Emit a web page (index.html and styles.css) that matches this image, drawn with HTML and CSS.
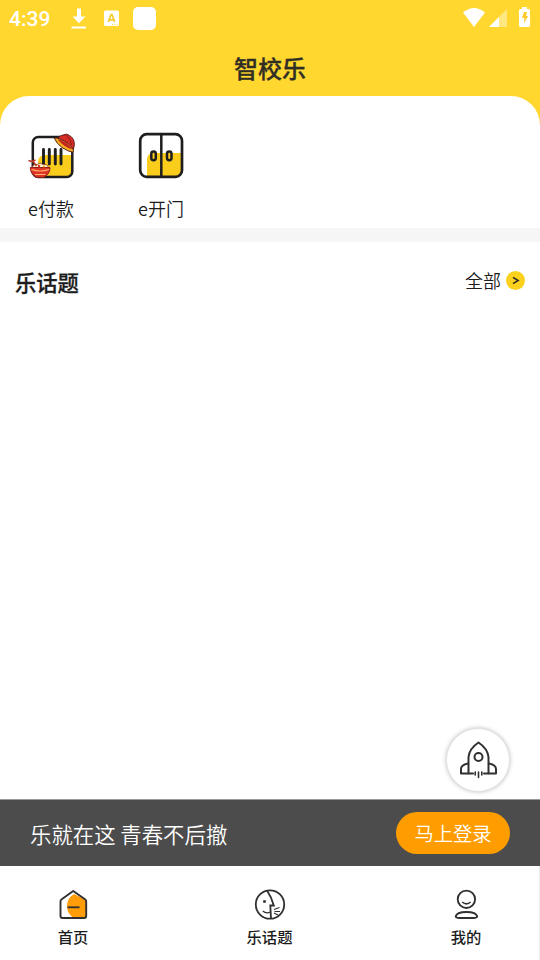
FILE: index.html
```html
<!DOCTYPE html>
<html lang="zh-CN">
<head>
<meta charset="utf-8">
<title>智校乐</title>
<link rel="stylesheet" href="styles.css">
</head>
<body>
<div class="app">
  <header class="header">
    <div class="status">
      <span class="time">4:39</span>
      <svg class="status-left" width="90" height="26" viewBox="69 6 90 26" fill="#fff">
        <path d="M77 8.500h4v8h4.500L79 23.200 72.500 16.500H77zM71.500 26.500h14.500v2H71.500z"/>
        <rect x="104" y="10.500" width="15" height="15.500" rx="1.500"/>
        <path d="M108.300 22 111 14.500h1L114.700 22M109.300 19.800h4.400" fill="none" stroke="#f5cb2b" stroke-width="1.700"/>
        <path d="M112 24.400h6" stroke="#ffd72f" stroke-width="1" stroke-dasharray="1 1.200"/>
        <rect x="133" y="7" width="23" height="23" rx="5"/>
      </svg>
      <svg class="status-right" width="72" height="26" viewBox="461 6 72 26" fill="#fff">
        <path d="M463 12.500Q474 3.500 485 12.500L474 27z"/>
        <path d="M507 9v18h-18z" opacity=".4"/>
        <path d="M499 17v10h-10z"/>
        <path d="M522 7h5v2h1.500q1.500 0 1.500 1.500V25.500q0 1.500-1.500 1.500h-8q-1.500 0-1.500-1.500V10.500q0-1.500 1.500-1.500H522z"/>
        <path d="M524 12h3l-1 4h2l-4 7.500.500-5.500H522z" fill="#ffc928"/>
      </svg>
    </div>
    <h1 class="title">智校乐</h1>
  </header>

  <nav class="services">
    <a class="service">
      <svg width="56" height="52" viewBox="23 130 56 52">
        <path d="M38 177v-15q0-7 8-7h27v18q0 4-5 4z" fill="#facd1d"/>
        <rect x="32.800" y="136.900" width="39.500" height="40" rx="5.500" fill="none" stroke="#1e1e20" stroke-width="2.500"/>
        <path d="M43.500 149.500v14.500M49.300 149.500v14.500M55.300 149.500v14.500M61 149.500v14.500" stroke="#1e1e20" stroke-width="2.900" stroke-linecap="round"/>
        <path d="M57.500 139C59.500 134.500 67 133.500 71 136.500C75 140 75 145.500 73 150Q67 141 57.500 139z" fill="#d92b25" stroke="#5e201b" stroke-width="1"/>
        <path d="M63 135.500l3.500-1.500 2.500 1.500M67 136q4 4 4.500 9" fill="none" stroke="#8d1c1a" stroke-width="1"/>
        <path d="M54.300 138.200Q57 137.500 60 139Q69 142.500 73 149Q73.800 151 73 152.300Q68 151.500 62 147.500Q56.500 143.500 54.300 138.200z" fill="#f5b51e" stroke="#5e201b" stroke-width="1"/>
        <path d="M57.500 139.200Q67 141 72.500 149.500Q63.500 147 57.500 139.200z" fill="#c5261f"/>
        <path d="M32 168q1-4.500 5-3.500 3-3 6 0 4.500-1 5.500 3.500z" fill="#fff2c6" stroke="#8c3021" stroke-width=".8"/>
        <path d="M28.500 160.500l5 1.500 3 4M32 161.500l3.500-1.500" fill="none" stroke="#bd3928" stroke-width="1.500"/>
        <path d="M30.300 167.500H50Q50 174 43.800 177.300H36.500Q30.300 174 30.300 167.500z" fill="#df3428" stroke="#982019" stroke-width="1"/>
        <path d="M31.500 169.500q8.500 3 17.500 0M35 174.500h10.500" fill="none" stroke="#ffb866" stroke-width="1.200"/>
        <circle cx="39" cy="166" r="1.200" fill="#dc3328"/><circle cx="44" cy="166.500" r="1.100" fill="#f09a22"/>
      </svg>
      <span>e付款</span>
    </a>
    <a class="service">
      <svg width="56" height="52" viewBox="133 130 56 52">
        <path d="M147 177v-17q0-7 7-7h28v19q0 5-5 5z" fill="#facd1d"/>
        <rect x="140.200" y="134.200" width="41.800" height="42.600" rx="6.500" fill="none" stroke="#1e1e20" stroke-width="2.700"/>
        <path d="M161.300 134v43" stroke="#1e1e20" stroke-width="2.500"/>
        <rect x="151.300" y="151.500" width="4.500" height="8.700" rx="2.200" fill="none" stroke="#1e1e20" stroke-width="2.500"/>
        <rect x="167" y="151.500" width="4.500" height="8.700" rx="2.200" fill="none" stroke="#1e1e20" stroke-width="2.500"/>
      </svg>
      <span>e开门</span>
    </a>
  </nav>

  <main class="topics">
    <div class="topics-head">
      <h2>乐话题</h2>
      <a class="all">全部
        <svg width="19" height="19" viewBox="0 0 19 19"><circle cx="9.500" cy="9.500" r="9.500" fill="#fbd11e"/><path d="M7 6.300 12.200 9.500 7 12.700" fill="none" stroke="#292929" stroke-width="1.500"/></svg>
      </a>
    </div>
    <button class="rocket" aria-label="回到顶部">
      <svg width="40" height="40" viewBox="458 740 40 40" fill="none" stroke="#303030" stroke-width="2" stroke-linejoin="round" stroke-linecap="round">
        <path d="M473 773.500H468.500V757Q469.500 748.500 478.500 742.500Q487.500 748.500 488.500 757V773.500H484"/>
        <circle cx="478.500" cy="757" r="4"/>
        <path d="M468 763.500Q461 765 461 769V773.500H468M489 763.500Q496 765 496 769V773.500H489"/>
        <path d="M475.200 772v3M478.500 772v5.500M481.800 772v3" stroke-width="1.600"/>
      </svg>
    </button>
  </main>

  <section class="login-bar">
    <span>乐就在这 青春不后撤</span>
    <button class="login">马上登录</button>
  </section>

  <nav class="tabs">
    <a class="tab">
      <svg width="34" height="34" viewBox="56 888 34 34">
        <path d="M86 900v16q0 2-2 2H74q-7-4-7-12 0-8 7-12z" fill="#ff9d08"/>
        <path d="M73.200 891 85 899.200q1.200.800 1.200 2.200V916q0 2-2 2H62.500q-2 0-2-2V901.400q0-1.400 1.200-2.200z" fill="none" stroke="#303030" stroke-width="1.900" stroke-linejoin="round"/>
        <path d="M67.500 907.300h12" stroke="#303030" stroke-width="1.800"/>
      </svg>
      <span>首页</span>
    </a>
    <a class="tab">
      <svg width="34" height="34" viewBox="253 888 34 34" fill="none" stroke="#303030" stroke-width="1.800">
        <circle cx="270" cy="904.500" r="14.200"/>
        <path d="M267 890.500Q271.500 897 273.800 905.500H270.300L271 918.500"/>
        <path d="M262.800 911q3.500 3.200 7.500 1M274 909.500l5.500-2M274.500 911.500h5.500M274 913l4 2" stroke-width="1.200"/>
        <rect x="263.200" y="900.200" width="2.600" height="2.600" fill="#303030" stroke="none"/>
      </svg>
      <span>乐话题</span>
    </a>
    <a class="tab">
      <svg width="34" height="34" viewBox="449.500 888 34 34" fill="none" stroke="#303030" stroke-width="1.900">
        <circle cx="466.900" cy="899.300" r="8.700"/>
        <path d="M462.700 902q4.200 3.700 8.400 0" stroke-width="1.600"/>
        <path d="M456.200 916.500Q457.200 912 466.900 912Q476.700 912 477.700 916.500Q477.200 918 474.200 918H459.700Q456.700 918 456.200 916.500z"/>
      </svg>
      <span>我的</span>
    </a>
  </nav>
</div>
</body>
</html>
```
FILE: styles.css
```css
* {
  box-sizing: border-box;
}

body {
  margin: 0;
  font-family: "Noto Sans CJK SC", sans-serif;
  font-weight: 350;
  color: #1c1c1c;
  background: #fff;
}

.app {
  width: 540px;
  height: 960px;
  display: flex;
  flex-direction: column;
  overflow: hidden;
  background: #ffd72f;
}

.header {
  height: 96px;
  flex: none;
}

.status {
  display: flex;
  align-items: center;
  height: 38px;
  padding: 0 7px 0 9px;
}

.time {
  width: 60px;
  font: 500 21px/38px Roboto, sans-serif;
  color: #fff;
}

.status-right {
  margin-left: auto;
}

.title {
  margin: 11px 0 0;
  font-size: 24px;
  line-height: 38px;
  font-weight: 500;
  -webkit-text-stroke: .3px #302d25;
  text-align: center;
  color: #302d25;
}

.services {
  flex: none;
  display: flex;
  gap: 54px;
  height: 132px;
  padding: 34px 23px 0;
  background: #fff;
  border-radius: 29px 29px 0 0;
}

.service {
  width: 56px;
  display: flex;
  flex-direction: column;
  align-items: center;
  font-size: 18px;
  line-height: 26px;
  white-space: nowrap;
}

.service span {
  margin-top: 13px;
}

.topics {
  position: relative;
  flex: 1;
  border-top: 14px solid #f6f6f6;
  background: #fff;
}

.topics-head {
  display: flex;
  justify-content: space-between;
  align-items: flex-start;
  padding: 24px 15px 0;
}

.topics h2 {
  margin: 0;
  font-size: 21.3px;
  line-height: 32px;
  font-weight: 500;
  -webkit-text-stroke: .3px #1c1c1c;
}

.all {
  display: flex;
  align-items: center;
  gap: 5px;
  font-size: 18px;
  line-height: 29px;
}

.rocket {
  position: absolute;
  right: 30px;
  bottom: 7px;
  width: 64px;
  height: 64px;
  padding: 0;
  display: flex;
  align-items: center;
  justify-content: center;
  border: 1px solid #e2e2e2;
  border-radius: 50%;
  background: #fff;
  box-shadow: 0 0 4px rgba(0, 0, 0, .25);
}

.login-bar {
  flex: none;
  display: flex;
  align-items: center;
  justify-content: space-between;
  height: 67px;
  padding: 0 30px;
  border-top: 1px solid #999;
  background: #4c4c4c;
  color: #fff;
  font-size: 21.4px;
}

.login {
  width: 114px;
  height: 42px;
  padding: 0;
  border: 0;
  border-radius: 21px;
  background: #ff9d00;
  color: #fff;
  font: 350 19.3px/42px "Noto Sans CJK SC", sans-serif;
}

.tabs {
  flex: none;
  display: flex;
  justify-content: space-between;
  height: 94px;
  padding: 22px 26px 0;
  border-right: 1px solid #eee;
  background: #fff;
}

.tab {
  width: 94px;
  display: flex;
  flex-direction: column;
  align-items: center;
  font-size: 15.3px;
  line-height: 22px;
  font-weight: 500;
}

.tab span {
  margin-top: 3px;
}
```
